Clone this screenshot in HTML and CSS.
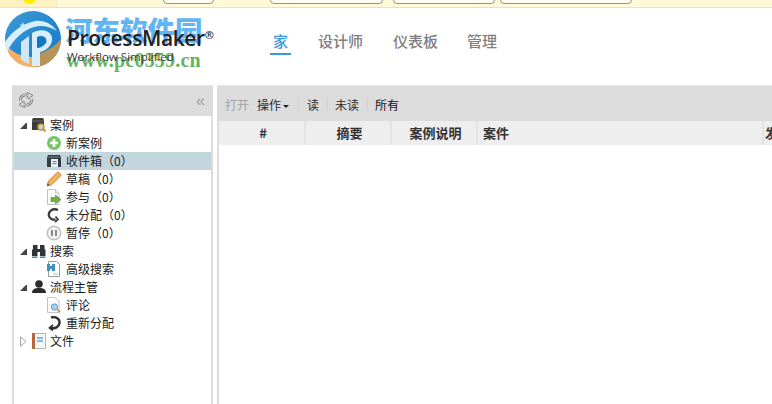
FILE: index.html
```html
<!DOCTYPE html>
<html lang="zh">
<head>
<meta charset="utf-8">
<title>ProcessMaker</title>
<link rel="stylesheet" href="styles.css">
</head>
<body>
<div class="notice">
  <div class="notice-left"><span class="sun"></span></div>
  <div class="notice-tabs">
    <span class="ntab ntab-a"></span>
    <span class="ntab ntab-b"></span>
    <span class="ntab ntab-c"></span>
    <span class="ntab ntab-d"></span>
  </div>
</div>
<header class="header">
  <div class="brand">
    <svg class="brand-mark" width="58" height="58" viewBox="0 0 58 58">
      <defs>
        <linearGradient id="disc" x1="0" y1="0" x2="1" y2="1">
          <stop offset="0" stop-color="#3f9ad6"/>
          <stop offset="1" stop-color="#0f78c8"/>
        </linearGradient>
      </defs>
      <circle cx="29" cy="28" r="28" fill="url(#disc)"/>
      <path d="M1.500 33 C4 47 15 56 29 56 C43 56 54 46 57 31 C50 42 40 46 29 46 C18 46 8 42 1.500 33Z" fill="#f6b063"/>
      <path d="M32 56 L33 43 C42 41 50 36 57 28 C56 44 45 55 32 56Z" fill="#b8935a"/>
      <path d="M1 31 C6 24 14 14 31 10 C40 9 48 13 53 20 C45 15 37 14 30 16 C20 19 10 27 3 41 C1.500 38 1 35 1 31Z" fill="#d8eefb"/>
      <path d="M17 49 L17 31 L25 25 L25 53 Z" fill="#cfe7f8"/>
      <path d="M28 22 C40 15 52 22 47 33 C44 39 37 41 36 41 L36 55 L28 55Z" fill="#d8eefb"/>
      <path d="M33 26 C39 23 44 27 42 32 C40 35 36 37 33 37Z" fill="#1577c4"/>
      <path d="M19 11 l1 2.500 2.500 .3 -2 1.600 .7 2.500 -2.200 -1.400 -2.200 1.400 .7 -2.500 -2 -1.600 2.500 -.3z" fill="#cfe7f8"/>
    </svg>
    <div class="mark-cn">河东软件园</div>
    <div class="mark-url">www.pc0359.cn</div>
    <div class="brand-text">
      <div class="brand-name">ProcessMaker<sup class="reg">®</sup></div>
      <div class="brand-tag">Workflow Simplified</div>
    </div>
  </div>
  <nav class="nav">
    <a class="nav-item active">家</a>
    <a class="nav-item n2">设计师</a>
    <a class="nav-item n3">仪表板</a>
    <a class="nav-item">管理</a>
  </nav>
</header>
<main class="main">
  <aside class="side">
    <div class="side-head">
      <svg class="refresh" width="16" height="16" viewBox="0 0 16 16" fill="none">
        <g stroke="#858585" stroke-width="2.800">
          <path d="M2.500 9 C1.500 5 6 1.500 11 3.500"/>
          <path d="M13.500 7 C14.500 11 10 14.500 5 12.500"/>
        </g>
        <path d="M9.500 .5 L15 3.500 L10 7Z M6.500 15.500 L1 12.500 L6 9Z" fill="#dcdcdc" stroke="#858585"/>
        <g stroke="#e6e6e6" stroke-width="1">
          <path d="M2.500 9 C1.500 5 6 1.500 10 3.300"/>
          <path d="M13.500 7 C14.500 11 10 14.500 6 12.700"/>
        </g>
      </svg>
      <span class="collapse">«</span>
    </div>
    <ul class="tree">
      <li class="row lvl1"><i class="tw down"></i>
        <svg class="ic" width="16" height="16" viewBox="0 0 16 16"><path d="M1 3q0-2 2-2h8q2 0 2 2v10H1z" fill="#3b3b3b"/><path d="M1 4h12" stroke="#6b6b6b"/><circle cx="10" cy="10" r="3" fill="#bcd8ea" stroke="#c9962e" stroke-width="1.600"/><path d="M12 12l2.500 2.500" stroke="#c9962e" stroke-width="2"/></svg>
        <span class="label">案例</span></li>
      <li class="row lvl2"><svg class="ic" width="16" height="16" viewBox="0 0 16 16"><circle cx="8" cy="8" r="7" fill="#76c566"/><path d="M8 4v8M4 8h8" stroke="#fff" stroke-width="2.600"/></svg><span class="label">新案例</span></li>
      <li class="row lvl2 sel"><svg class="ic" width="16" height="16" viewBox="0 0 16 16"><path d="M1 5l1-3h12l1 3v9H1z" fill="#333d45"/><path d="M2.500 4h11" stroke="#7a868e"/><rect x="5" y="6" width="7" height="8" fill="#e6eff4"/><path d="M6.500 8.500h4M6.500 10.500h4" stroke="#4a86b5"/></svg><span class="label">收件箱（0）</span></li>
      <li class="row lvl2"><svg class="ic" width="16" height="16" viewBox="0 0 16 16"><path d="M1 15l1.500-5L11 1.500q1-1 2 0l1.500 1.500q1 1 0 2L6 13.500z" fill="#f2b25c" stroke="#c98a3c"/><path d="M1 15l.8-2.800 2 2z" fill="#555"/></svg><span class="label">草稿（0）</span></li>
      <li class="row lvl2"><svg class="ic" width="16" height="16" viewBox="0 0 16 16"><path d="M1.500.500h8l3.500 3.500v11.500h-11.500z" fill="#fcfcfc" stroke="#c4c4c4"/><path d="M9.500.500v3.500h3.500" fill="#eee" stroke="#c4c4c4"/><path d="M5 8.500h4.500V6l5.500 4.500-5.500 4.500v-2.500H5z" fill="#72b04e" stroke="#4f8a35" stroke-width=".6"/></svg><span class="label">参与（0）</span></li>
      <li class="row lvl2"><svg class="ic" width="16" height="16" viewBox="0 0 16 16" fill="none" stroke="#3a3a3a" stroke-width="2.400"><path d="M12 3 C6.500 .5 2 4.500 3 9 C3.700 11.500 6.500 13 9.500 12.500"/><path d="M9.500 9.500l2.500 3-3 2.500" stroke-width="1.700"/></svg><span class="label">未分配（0）</span></li>
      <li class="row lvl2"><svg class="ic" width="16" height="16" viewBox="0 0 16 16"><circle cx="8" cy="8" r="6.800" fill="#f2f2f2" stroke="#c2c2c2" stroke-width="1.500"/><path d="M6 5v6M10 5v6" stroke="#8a8a8a" stroke-width="2"/></svg><span class="label">暂停（0）</span></li>
      <li class="row lvl1"><i class="tw down"></i>
        <svg class="ic" width="16" height="16" viewBox="0 0 16 16"><path d="M2 2h4.500v4H9V2h4.500v4l1 1v6H9V9H6.500v4H1V7l1-1z" fill="#30343a"/><path d="M1 13.500h5.500v1.500H1zM9 13.500h5.500v1.500H9z" fill="#4f7fa8"/></svg>
        <span class="label">搜索</span></li>
      <li class="row lvl2"><svg class="ic" width="16" height="16" viewBox="0 0 16 16"><path d="M2.500.500h8l3 3v12h-11z" fill="#fff" stroke="#9a9a9a"/><path d="M1 3h3v2h2V3h3v7H6V8H4v2H1z" fill="#3f8fc0"/><path d="M7 13h5" stroke="#bbb"/></svg><span class="label">高级搜索</span></li>
      <li class="row lvl1"><i class="tw down"></i>
        <svg class="ic" width="16" height="16" viewBox="0 0 16 16"><circle cx="8" cy="5" r="3.800" fill="#2b2b2b"/><path d="M1 14c0-4 3-5 7-5s7 1 7 5z" fill="#2b2b2b"/></svg>
        <span class="label">流程主管</span></li>
      <li class="row lvl2"><svg class="ic" width="16" height="16" viewBox="0 0 16 16"><path d="M1.500.500h8l3.500 3.500v11.500h-11.500z" fill="#fcfcfc" stroke="#c4c4c4"/><circle cx="8.500" cy="10" r="3.200" fill="#a9cdea" stroke="#6b9cc4"/><path d="M11.500 12.500l2.500 2.500" stroke="#d99a4a" stroke-width="2.200"/></svg><span class="label">评论</span></li>
      <li class="row lvl2"><svg class="ic" width="16" height="16" viewBox="0 0 16 16" fill="none" stroke="#2e2e2e" stroke-width="2.400"><path d="M5 2.500 C10 1 14 4 13.500 8 C13 12 9 14 5 13"/><path d="M7 10l-3.500 3 3.500 2.500" stroke-width="1.700"/></svg><span class="label">重新分配</span></li>
      <li class="row lvl1"><svg class="tw-open" width="7" height="11" viewBox="0 0 7 11"><path d="M.5 .8 L6 5.500 L.5 10.200Z" fill="#fff" stroke="#a5a5a5"/></svg>
        <svg class="ic" width="16" height="16" viewBox="0 0 16 16"><rect x="2.500" y=".5" width="12" height="15" fill="#f6f6f6" stroke="#b5b5b5"/><rect x="1" y="0" width="3" height="16" fill="#b5693a"/><path d="M6 5h6M6 8h6" stroke="#6d9fdc" stroke-width="1.500"/></svg>
        <span class="label">文件</span></li>
    </ul>
  </aside>
  <section class="content">
    <div class="toolbar">
      <span class="tool off">打开</span>
      <span class="tool">操作<i class="caret"></i></span>
      <span class="sep"></span>
      <span class="tool read">读</span>
      <span class="sep"></span>
      <span class="tool">未读</span>
      <span class="sep"></span>
      <span class="tool strong">所有</span>
    </div>
    <div class="thead">
      <div class="th c1">#</div>
      <div class="th c2">摘要</div>
      <div class="th c3">案例说明</div>
      <div class="th c4">案件</div>
      <div class="th c5">发送</div>
    </div>
  </section>
</main>
</body>
</html>
```
FILE: styles.css
```css
* { box-sizing: border-box; }
html, body { margin: 0; padding: 0; }
body {
  width: 772px;
  height: 404px;
  overflow: hidden;
  background: #fff;
  font-family: "Noto Sans CJK SC", "Liberation Sans", sans-serif;
  color: #222;
}
.notice {
  height: 8px;
  display: flex;
  background: #fff8d9;
  border-bottom: 1px solid #f1e3ae;
  overflow: hidden;
}
.notice-left {
  width: 57px;
  background: #fff2c0;
  border-right: 1px solid #f6e8b8;
  padding-left: 22px;
  overflow: hidden;
}
.sun {
  display: block;
  width: 15px;
  height: 15px;
  margin-top: -11px;
  border-radius: 50%;
  background: #fff000;
}
.notice-tabs { display: flex; }
.ntab {
  display: block;
  height: 11px;
  margin-top: -7px;
  background: #fffdf2;
  border: 1px solid #9e9480;
  border-radius: 4px;
}
.ntab-a { width: 51px; margin-left: 106px; }
.ntab-b { width: 113px; margin-left: 56px; }
.ntab-c { width: 102px; margin-left: 10px; }
.ntab-d { width: 132px; margin-left: 5px; }

.header {
  height: 78px;
  display: flex;
  position: relative;
}
.brand {
  width: 270px;
  position: relative;
  display: flex;
}
.brand-mark { margin: 3px 0 0 4px; flex: none; }
.brand-text {
  position: relative;
  margin: 18px 0 0 5px;
  font-family: "Open Sans", "Liberation Sans", sans-serif;
}
.brand-name {
  font-size: 21px;
  line-height: 24px;
  font-weight: 600;
  color: #222;
  letter-spacing: -0.400px;
  white-space: nowrap;
}
.reg { font-size: 11px; line-height: 0; vertical-align: 7px; }
.brand-tag {
  font-size: 11.500px;
  line-height: 14px;
  color: #3c3c3c;
  white-space: nowrap;
}
.mark-cn {
  position: absolute;
  left: 65px;
  top: 3px;
  font-family: "Noto Sans CJK SC", sans-serif;
  font-size: 27.500px;
  line-height: 36px;
  font-weight: 900;
  color: #62b5f3;
  white-space: nowrap;
}
.mark-url {
  position: absolute;
  left: 66px;
  top: 42px;
  font-family: "Liberation Serif", serif;
  font-size: 20px;
  line-height: 20px;
  font-weight: 700;
  letter-spacing: 0.200px;
  color: #64b35f;
  white-space: nowrap;
}
.nav {
  display: flex;
  padding-top: 23px;
  font-size: 15px;
  font-weight: 500;
}
.nav-item {
  height: 24px;
  line-height: 20px;
  color: #808080;
  white-space: nowrap;
}
.nav-item.active {
  width: 21px;
  text-align: center;
  color: #3b97de;
  border-bottom: 2px solid #3b97de;
  margin-right: 27px;
}
.n2 { margin-right: 30px; }
.n3 { margin-right: 29px; }

.main {
  height: 318px;
  display: flex;
}
.side {
  width: 201px;
  margin: -1px 0 0 12px;
  border: solid #dcdcdc;
  border-width: 1px 2px 0;
  border-top-color: #e6e6e6;
  flex: none;
  font-size: 12px;
}
.side-head {
  height: 30px;
  background: #dcdcdc;
  display: flex;
  justify-content: space-between;
  align-items: center;
  padding: 0 6px 2px 4px;
}
.collapse { font-size: 16px; line-height: 15px; color: #a0a0a0; font-family: "Liberation Sans", sans-serif; }
.tree { list-style: none; margin: 0; padding: 0; }
.row {
  height: 18px;
  display: flex;
  align-items: center;
  white-space: nowrap;
  color: #1a1a1a;
}
.label { position: relative; top: -1px; }
.lvl1 { padding-left: 6px; }
.lvl2 { padding-left: 32px; }
.ic { flex: none; margin-right: 4px; }
.lvl1 .ic { margin-left: 4px; margin-right: 3px; }
.sel { background: #c3d6de; }
.tw { display: block; width: 7px; height: 7px; flex: none; }
.tw.down {
  border-style: solid;
  border-width: 0 0 6px 6px;
  border-color: transparent transparent #444 transparent;
}
.tw-open { display: block; flex: none; }

.content {
  flex: 1;
  min-width: 0;
  margin: -1px 0 0 4px;
  border-left: 2px solid #dcdcdc;
  border-top: 1px solid #e6e6e6;
  overflow: hidden;
}
.toolbar {
  height: 35px;
  background: #dcdcdc;
  display: flex;
  align-items: center;
  padding-left: 5px;
  font-size: 12px;
  padding-top: 1px;
}
.tool { color: #2b2b2b; padding: 0 1px; white-space: nowrap; }
.tool.off { color: #a3a3a3; margin-right: 6px; }
.tool.read { margin-left: 1px; }
.tool.strong { color: #111; }
.caret {
  display: inline-block;
  margin: 0 1px 0 2px;
  vertical-align: 2px;
  border-style: solid;
  border-width: 3px 3px 0;
  border-color: #222 transparent transparent;
}
.sep {
  width: 1px;
  height: 14px;
  background: #d0d0d0;
  margin: 0 6px 0 7px;
}
.thead {
  height: 24px;
  background: #eeeeee;
  display: flex;
  width: 600px;
  font-size: 13px;
  font-weight: 700;
  color: #333;
}
.th {
  line-height: 24px;
  border-right: 2px solid #e3e3e3;
  text-align: center;
  flex: none;
  white-space: nowrap;
}
.c1, .c2, .c3 { padding-left: 3px; }
.c1 { width: 87px; }
.c2 { width: 86px; }
.c3 { width: 86px; }
.c4 { width: 286px; text-align: left; padding-left: 5px; }
.c5 { width: 55px; text-align: left; padding-left: 1px; border-right: 0; }
```
